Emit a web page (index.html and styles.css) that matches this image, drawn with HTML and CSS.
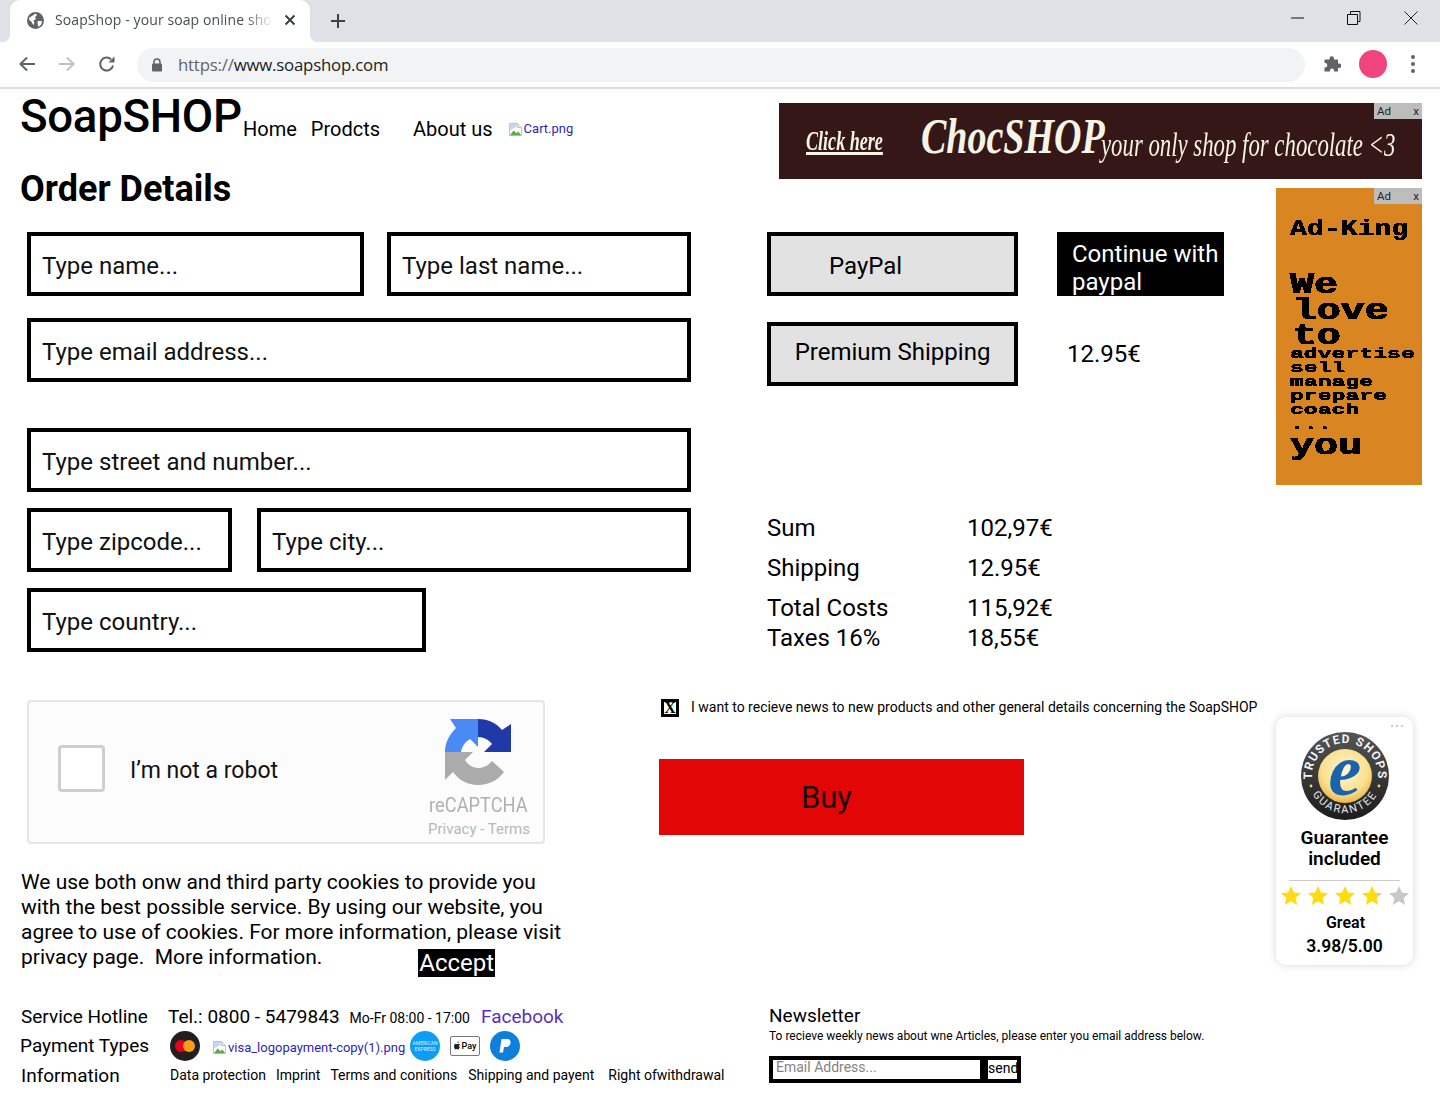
FILE: index.html
```html
<!DOCTYPE html>
<html lang="en">
<head>
<meta charset="utf-8">
<title>SoapShop - your soap online shop</title>
<link rel="stylesheet" href="styles.css">
</head>
<body>
<svg class="defs" width="0" height="0" aria-hidden="true">
  <defs>
    <filter id="pixel" x="0" y="0" width="100%" height="100%">
      <feComponentTransfer><feFuncA type="discrete" tableValues="0 1"/></feComponentTransfer>
    </filter>
    <symbol id="broken" viewBox="0 0 16 16">
      <path d="M1.500 1.500H10L14.500 6V14.500H1.500Z" fill="#fff" stroke="#b9bcc2"/>
      <path d="M10 1.500V6H14.500" fill="#e8eaed" stroke="#b9bcc2"/>
      <path d="M2 14L6 9L9 12L11 10L14 14Z" fill="#5fa84f"/>
      <path d="M2 2H9V5L2 9Z" fill="#c3d7f5"/>
    </symbol>
    <linearGradient id="starpart"><stop offset="78%" stop-color="#ffdc0f"/><stop offset="78%" stop-color="#c8c8c8"/></linearGradient>
    <radialGradient id="gold" cx="50%" cy="40%" r="60%"><stop offset="0%" stop-color="#fff6d8"/><stop offset="70%" stop-color="#fbe08e"/><stop offset="100%" stop-color="#e8b94c"/></radialGradient>
    <linearGradient id="ringfill" x1="0" y1="0" x2="0" y2="1"><stop offset="0%" stop-color="#555"/><stop offset="100%" stop-color="#1c1c1c"/></linearGradient>
    <path id="arc-top" d="M15.400 60.500A33 33 0 1 1 72.600 60.500"/>
    <path id="arc-bottom" d="M8.400 34A37 37 0 1 0 79.600 34"/>
    <polygon id="star" points="10,0 12.900,6.600 20,7.300 14.600,12 16.200,19 10,15.300 3.800,19 5.400,12 0,7.300 7.100,6.600"/>
  </defs>
</svg>

<header class="chrome">
  <div class="tabstrip">
    <div class="tab">
      <svg class="tab-globe" viewBox="0 0 16 16"><circle cx="8" cy="8" r="8" fill="#5f6368"/><path d="M2 5.500L5 3.500L8 1.500L9.500 3L7.500 5L8.500 6.500L6 8L7 10L6 12.500L4 9L2 7.500ZM10 8.500H14L13.500 11.500L11 14L10 11.500Z" fill="#fff"/></svg>
      <span class="tab-title">SoapShop - your soap online shop</span>
      <svg class="tab-close" viewBox="0 0 12 12"><path d="M1.500 1.500L10.500 10.500M10.500 1.500L1.500 10.500" stroke="#3c4043" stroke-width="2"/></svg>
    </div>
    <svg class="new-tab" viewBox="0 0 16 16"><path d="M8 1V15M1 8H15" stroke="#3c4043" stroke-width="2"/></svg>
    <div class="win-controls">
      <svg class="win-min" viewBox="0 0 14 14"><path d="M0 7H13" stroke="#111" stroke-width="1"/></svg>
      <svg class="win-max" viewBox="0 0 14 14"><path d="M3.500 3V.5H13V10.500H10.500M.5 3.500H10.500V13.500H.5Z" fill="none" stroke="#111"/></svg>
      <svg viewBox="0 0 14 14"><path d="M.5 .5L13.500 13.500M13.500 .5L.5 13.500" stroke="#222"/></svg>
    </div>
  </div>
  <div class="toolbar">
    <svg class="tool-icon" viewBox="0 0 18 18"><path d="M17 9H3M9 2.500L2.500 9L9 15.500" fill="none" stroke="#5f6368" stroke-width="2"/></svg>
    <svg class="tool-icon" viewBox="0 0 18 18"><path d="M1 9H15M9 2.500L15.500 9L9 15.500" fill="none" stroke="#bdc1c6" stroke-width="2"/></svg>
    <svg class="tool-icon" viewBox="0 0 18 18"><path d="M15 10.500A6.500 6.500 0 1 1 13.200 4.400" fill="none" stroke="#5f6368" stroke-width="2"/><path d="M16.500 1.500V7.500H10.500Z" fill="#5f6368"/></svg>
    <div class="omnibox">
      <svg class="lock" viewBox="0 0 12 14"><path d="M3 6V4A3 3 0 0 1 9 4V6" fill="none" stroke="#5f6368" stroke-width="1.500"/><rect x="1" y="5.500" width="10" height="8" rx="1.200" fill="#5f6368"/></svg>
      <span class="url"><span class="url-dim">https://</span>www.soapshop.com</span>
    </div>
    <svg class="ext" viewBox="0 0 18 18"><path d="M6.500 3.500A2.200 2.200 0 0 1 11 3.500V4.500H15V8.500H16A2.200 2.200 0 0 1 16 13H15V16.500H11V15.500A2 2 0 0 0 7 15.500V16.500H1.500V12.500H2.500A2.300 2.300 0 0 0 2.500 8H1.500V4.500H6.500Z" fill="#5f6368"/></svg>
    <span class="avatar"></span>
    <span class="kebab"><i></i><i></i><i></i></span>
  </div>
</header>

<div class="page">
  <section class="top">
    <div class="top-left">
      <div class="brand-row">
        <a class="logo">SoapSHOP</a>
        <nav class="nav">
          <a class="nav-home">Home</a>
          <a class="nav-products">Prodcts</a>
          <a class="nav-about">About us</a>
          <a class="broken-link nav-cart"><svg class="broken"><use href="#broken"/></svg>Cart.png</a>
        </nav>
      </div>
      <h1 class="title">Order Details</h1>
    </div>
    <aside class="banner">
      <span class="ad-tag"><span>Ad</span><span>x</span></span>
      <span class="banner-click">Click here</span>
      <span class="banner-brand">ChocSHOP</span>
      <span class="banner-slogan">your only shop for chocolate &lt;3</span>
    </aside>
  </section>

  <section class="main">
    <form class="address">
      <div class="row">
        <input class="field w-name" placeholder="Type name...">
        <input class="field w-last" placeholder="Type last name...">
      </div>
      <div class="row"><input class="field w-full" placeholder="Type email address..."></div>
      <div class="row row-gap"><input class="field w-full" placeholder="Type street and number..."></div>
      <div class="row row-tight">
        <input class="field w-zip" placeholder="Type zipcode...">
        <input class="field w-city" placeholder="Type city...">
      </div>
      <div class="row row-tight"><input class="field w-country" placeholder="Type country..."></div>
    </form>

    <div class="checkout">
      <div class="pay-row">
        <div class="option option-paypal">PayPal</div>
        <div class="continue">Continue with paypal</div>
      </div>
      <div class="ship-row">
        <div class="option option-ship">Premium Shipping</div>
        <div class="ship-price">12.95€</div>
      </div>
      <dl class="totals">
        <div class="total-line"><dt>Sum</dt><dd>102,97€</dd></div>
        <div class="total-line"><dt>Shipping</dt><dd>12.95€</dd></div>
        <div class="total-line"><dt>Total Costs</dt><dd>115,92€</dd></div>
        <div class="total-line total-tax"><dt>Taxes 16%</dt><dd>18,55€</dd></div>
      </dl>
    </div>

    <aside class="side-ad">
      <span class="ad-tag"><span>Ad</span><span>x</span></span>
      <div class="px px-title">Ad-King</div>
      <div class="px px-big px-we">We</div>
      <div class="px px-big px-love">love</div>
      <div class="px px-big px-to">to</div>
      <div class="px px-small px-adv">advertise</div>
      <div class="px px-small">sell</div>
      <div class="px px-small">manage</div>
      <div class="px px-small">prepare</div>
      <div class="px px-small">coach</div>
      <div class="px px-small px-dots">...</div>
      <div class="px px-big px-you">you</div>
    </aside>
  </section>

  <section class="lower">
    <div class="lower-left">
      <div class="captcha">
        <span class="captcha-box"></span>
        <span class="captcha-label">I’m not a robot</span>
        <div class="captcha-brand">
          <svg class="captcha-logo" viewBox="0 0 66 67">
            <path d="M33 0C44 0 51 4 57 11L66 5V33H39L47 25C44 21 39 18 33 18Z" fill="#1f39a8"/>
            <path d="M5 0H33V28L25 20C20 23 17 27 16 33H0C0 24 4 16 11 9Z" fill="#4a8af4"/>
            <path d="M0 33H28L20 41C23 46 28 49 33 49C39 49 44 46 47 42L59 53C53 61 44 66 33 66C22 66 14 61 8 53L0 61Z" fill="#ababab"/>
          </svg>
          <span class="captcha-name">reCAPTCHA</span>
          <span class="captcha-links">Privacy - Terms</span>
        </div>
      </div>
      <p class="cookies">We use both onw and third party cookies to provide you with the best possible service. By using our website, you agree to use of cookies. For more information, please visit privacy page.&nbsp; More information.<span class="accept">Accept</span></p>
    </div>

    <div class="lower-mid">
      <label class="news-check"><span class="xbox">X</span><span>I want to recieve news to new products and other general details concerning the SoapSHOP</span></label>
      <div class="buy">Buy</div>
    </div>

    <aside class="trust">
      <span class="trust-dots"><i></i><i></i><i></i></span>
      <svg class="seal" viewBox="0 0 88 88">
        <circle cx="44" cy="44" r="44" fill="url(#ringfill)"/>
        <circle cx="44" cy="44" r="27" fill="url(#gold)"/>
        <text class="seal-text"><textPath href="#arc-top" startOffset="50%" text-anchor="middle">TRUSTED SHOPS</textPath></text>
        <text class="seal-text seal-text-low"><textPath href="#arc-bottom" startOffset="50%" text-anchor="middle">GUARANTEE</textPath></text>
        <circle cx="10" cy="54" r="1.400" fill="#f6d774"/><circle cx="78" cy="54" r="1.400" fill="#f6d774"/>
        <text class="seal-e" x="44" y="63" text-anchor="middle">e</text>
      </svg>
      <div class="trust-head">Guarantee<br>included</div>
      <hr class="trust-line">
      <svg class="stars" viewBox="0 0 128 20">
        <use href="#star" x="0" fill="#ffdc0f"/>
        <use href="#star" x="27" fill="#ffdc0f"/>
        <use href="#star" x="54" fill="#ffdc0f"/>
        <use href="#star" x="81" fill="url(#starpart)"/>
        <use href="#star" x="108" fill="#c8c8c8"/>
      </svg>
      <div class="trust-great">Great</div>
      <div class="trust-score">3.98/5.00</div>
    </aside>
  </section>

  <footer class="footer">
    <div class="foot-left">
      <div class="foot-row foot-row-1">
        <span class="foot-label">Service Hotline</span>
        <span class="tel">Tel.: 0800 - 5479843</span>
        <span class="hours">Mo-Fr 08:00 - 17:00</span>
        <a class="facebook">Facebook</a>
      </div>
      <div class="foot-row foot-row-2">
        <span class="foot-label foot-label-pay">Payment Types</span>
        <span class="pay-icons">
          <svg class="pay-icon" viewBox="0 0 30 30"><circle cx="15" cy="15" r="15" fill="#231f20"/><circle cx="11" cy="15" r="6" fill="#eb001b"/><circle cx="19" cy="15" r="6" fill="#f79e1b"/></svg>
          <a class="broken-link pay-visa"><svg class="broken"><use href="#broken"/></svg>visa_logopayment-copy(1).png</a>
          <span class="amex">AMERICAN<br>EXPRESS</span>
          <span class="applepay"><svg viewBox="0 0 8 10"><path d="M5.500 0C5.600 1.200 4.700 2 3.800 2C3.700 1 4.500 .2 5.500 0ZM6.600 7C6.200 8.300 5.400 9.500 4.600 9.500C4 9.500 3.800 9.100 3.200 9.100C2.600 9.100 2.300 9.500 1.800 9.500C.9 9.500 0 7.600 0 5.900C0 4.200 1 3.100 2.100 3.100C2.700 3.100 3.200 3.500 3.600 3.500C4 3.500 4.500 3 5.300 3C5.900 3 6.500 3.300 6.900 3.900C5.400 4.700 5.600 6.600 6.600 7Z" fill="#222"/></svg>Pay</span>
          <svg class="pay-icon pay-pp" viewBox="0 0 30 30"><circle cx="15" cy="15" r="15" fill="#0f7fdc"/><path d="M11.500 8H17C20 8 21 10 20.400 12.500C19.800 15 18 16 15.500 16H14L13 21.500H9.500Z" fill="#fff"/></svg>
        </span>
      </div>
      <div class="foot-row foot-row-3">
        <span class="foot-label">Information</span>
        <a class="info-1">Data protection</a>
        <a class="info-2">Imprint</a>
        <a class="info-3">Terms and conitions</a>
        <a class="info-4">Shipping and payent</a>
        <a class="info-5">Right ofwithdrawal</a>
      </div>
    </div>
    <div class="newsletter">
      <div class="news-title">Newsletter</div>
      <div class="news-text">To recieve weekly news about wne Articles, please enter you email address below.</div>
      <form class="news-form">
        <input class="news-input" placeholder="Email Address...">
        <button class="news-send" type="button">send</button>
      </form>
    </div>
  </footer>
</div>
</body>
</html>
```
FILE: styles.css
```css
* { box-sizing: border-box; }
html, body { margin: 0; height: 1113px; overflow: hidden; background: #fff; }
body { font-family: Roboto, "Liberation Sans", sans-serif; color: #000; }
.defs { position: absolute; }
a { color: inherit; text-decoration: none; }

/* browser chrome */
.chrome { height: 89px; border-bottom: 2px solid #dadce0; font-family: "Open Sans", "Noto Sans", sans-serif; }
.tabstrip { height: 42px; background: #dee1e6; display: flex; align-items: center; }
.tab { position: relative; width: 300px; height: 42px; margin-left: 10px; background: #fff; border-radius: 10px 10px 0 0; display: flex; align-items: center; padding: 0 14px 2px 17px; }
.tab::before, .tab::after { content: ""; position: absolute; bottom: 0; width: 8px; height: 8px; }
.tab::before { left: -8px; background: radial-gradient(circle at 0 0, #dee1e6 8px, #fff 8.5px); }
.tab::after { right: -8px; background: radial-gradient(circle at 100% 0, #dee1e6 8px, #fff 8.5px); }
.tab-globe { width: 17px; height: 17px; flex: none; }
.tab-title { margin: 0 0 2px 11px; width: 218px; font-size: 14px; letter-spacing: .1px; color: #4a4d51; white-space: nowrap; overflow: hidden; -webkit-mask-image: linear-gradient(90deg, #000 190px, transparent 218px); mask-image: linear-gradient(90deg, #000 190px, transparent 218px); }
.tab-close { width: 12px; height: 12px; margin-left: auto; flex: none; }
.new-tab { width: 16px; height: 16px; margin-left: 20px; }
.win-controls { margin-left: auto; display: flex; gap: 44px; padding: 0 22px 6px 0; }
.win-controls svg { width: 14px; height: 14px; display: block; }
.win-min { margin-right: -2px; }
.win-max { margin-right: -1px; }
.toolbar { height: 45px; background: #fff; display: flex; align-items: center; padding: 0 18px 2px 18px; }
.tool-icon { width: 18px; height: 18px; margin-right: 22px; flex: none; }
.omnibox { width: 1168px; height: 34px; margin: 2px 0 0 -1px; border-radius: 17px; background: #f1f3f4; display: flex; align-items: center; padding-left: 14px; }
.lock { width: 12px; height: 14px; }
.url { margin-left: 15px; font-size: 16.8px; letter-spacing: -.2px; color: #202124; }
.url-dim { color: #5f6368; }
.ext { width: 18px; height: 18px; margin-left: 18px; flex: none; }
.avatar { width: 28px; height: 28px; border-radius: 50%; background: #f1437d; margin-left: 18px; flex: none; }
.kebab { display: flex; flex-direction: column; gap: 3px; margin-left: 24px; }
.kebab i { width: 4px; height: 4px; border-radius: 50%; background: #5f6368; display: block; }

/* header */
.page { display: flex; flex-direction: column; }
.top { height: 99px; display: flex; align-items: flex-start; justify-content: space-between; padding-left: 20px; }
.brand-row { display: flex; align-items: flex-end; height: 57px; }
.logo { font-size: 45.6px; font-weight: 500; line-height: 56px; width: 223px; letter-spacing: -.3px; margin-bottom: 1px; }
.nav { display: flex; align-items: baseline; font-size: 20px; line-height: 24px; padding-bottom: 3px; }
.nav-products { margin-left: 14px; }
.nav-about { margin-left: 33px; }
.nav-cart { margin: 0 0 2px 15px; align-self: flex-end; }
.broken-link { font-size: 13px; color: #2f1fb5; display: inline-flex; align-items: center; white-space: nowrap; }
.broken { width: 15px; height: 15px; margin-right: 1px; flex: none; }
.title { margin: 22px 0 0; font-size: 36px; line-height: 42px; font-weight: 700; }
.banner { position: relative; width: 643px; height: 76px; margin: 14px 18px 0 0; background: #351717; color: #f6f4e4; display: flex; align-items: center; font-family: "Liberation Serif", serif; font-style: italic; white-space: nowrap; }
.ad-tag { position: absolute; top: 0; right: 0; width: 48px; height: 16px; background: #bdbdbd; color: #222; font: 11.5px/16px Roboto, sans-serif; display: flex; justify-content: space-between; padding: 0 3px; }
.banner-click { margin-left: 27px; width: 116px; font-size: 27px; font-weight: 700; transform: scaleX(.67); transform-origin: left; text-decoration: underline; text-decoration-thickness: 3px; text-underline-offset: 2px; flex: none; }
.banner-brand { width: 178px; font-size: 50px; font-weight: 700; transform: translateY(-5px) scaleX(.76); transform-origin: left; flex: none; margin-left: -1px; }
.banner-slogan { font-size: 34px; transform: scaleX(.67); transform-origin: left; margin-top: 8px; flex: none; margin-left: 2px; }

/* main */
.main { display: flex; align-items: flex-start; height: 464px; }
.address { width: 664px; margin: 44px 0 0 27px; display: flex; flex-direction: column; }
.row { display: flex; justify-content: space-between; margin-bottom: 22px; }
.row-gap { margin-top: 24px; margin-bottom: 16px; }
.row-tight { margin-bottom: 16px; }
.field { height: 64px; border: 4px solid #000; padding: 4px 11px 0; font: 24px Roboto, sans-serif; color: #000; outline: none; background: #fff; border-radius: 0; }
.field::placeholder { color: #111; opacity: 1; }
.w-name { width: 337px; }
.w-last { width: 304px; }
.w-full { width: 664px; }
.w-zip { width: 205px; }
.w-city { width: 434px; }
.w-country { width: 399px; }

.checkout { width: 457px; margin: 44px 0 0 76px; font-size: 24px; }
.pay-row, .ship-row { display: flex; align-items: center; }
.ship-row { margin-top: 26px; }
.option { width: 251px; height: 64px; border: 4px solid #000; background: #e2e2e2; display: flex; align-items: center; flex: none; }
.option-paypal { padding: 4px 0 0 58px; }
.option-ship { justify-content: center; padding-bottom: 4px; }
.continue { margin-left: 39px; width: 167px; height: 64px; background: #000; color: #fff; padding: 8px 0 0 15px; line-height: 28px; }
.ship-price { margin-left: 49px; margin-top: -1px; }
.totals { margin: 122px 0 0; }
.total-line { display: flex; height: 40px; line-height: 40px; }
.total-line dt { width: 200px; }
.total-line dd { margin: 0; }
.total-tax { height: 30px; line-height: 20px; }

.side-ad { position: relative; width: 146px; height: 297px; margin-left: 52px; background: #d88522; overflow: hidden; padding: 32px 0 0 14px; font-family: "Liberation Mono", "DejaVu Sans Mono", monospace; font-weight: 700; -webkit-text-stroke: .5px #000; }
.ad-tag { -webkit-text-stroke: 0; font-weight: 400; }
.px { transform-origin: left; white-space: nowrap; filter: url(#pixel); }
.px-title { font-size: 22px; line-height: 20px; transform: scaleX(1.28); margin-bottom: 33px; }
.px-big { font-size: 29px; line-height: 25.5px; transform: scaleX(1.38); -webkit-text-stroke: 1px #000; }
.px-love, .px-to { padding-left: 2px; }
.px-small { font-size: 14px; line-height: 14.2px; transform: scaleX(1.65); }
.px-adv { margin-top: -3px; }
.px-dots { line-height: 20px; margin-top: -3px; }
.px-you { margin-top: -1px; }

/* lower */
.lower { display: flex; align-items: flex-start; height: 301px; margin-top: 48px; }
.lower-left { width: 659px; padding-left: 21px; flex: none; }
.captcha { margin-left: 6px; width: 518px; height: 144px; border: 2px solid #e6e6e6; border-radius: 4px; background: #fcfcfc; display: flex; align-items: center; padding-left: 29px; position: relative; }
.captcha-box { width: 47px; height: 47px; border: 3px solid #cfcfcf; border-radius: 4px; background: #fff; flex: none; margin-bottom: 8px; }
.captcha-label { margin: 0 0 4px 25px; font-size: 23px; color: #111; }
.captcha-brand { margin-left: auto; margin-right: 13px; width: 104px; display: flex; flex-direction: column; align-items: center; align-self: flex-start; padding-top: 17px; }
.captcha-logo { width: 66px; height: 67px; display: block; }
.captcha-name { font-size: 20.5px; line-height: 24px; color: #b0b0b0; margin-top: 7px; transform: scaleX(.89); white-space: nowrap; }
.captcha-links { font-size: 15px; line-height: 18px; color: #b8b8b8; margin-top: 3px; padding-left: 2px; white-space: nowrap; }
.cookies { width: 545px; margin: 26px 0 0; font-size: 21px; line-height: 25px; }
.accept { font-size: 24px; line-height: 1; vertical-align: -7px; background: #000; color: #fff; margin-left: 96px; padding: 0 1px; }

.lower-mid { width: 638px; flex: none; margin-right: -21px; }
.news-check { display: flex; align-items: center; height: 18px; margin: -2px 0 0 2px; font-size: 14px; gap: 12px; white-space: nowrap; }
.xbox { width: 18px; height: 18px; background: #000; display: inline-flex; justify-content: center; align-items: center; position: relative; z-index: 0; font: 700 16px/1 "Liberation Serif", serif; color: #000; flex: none; margin-top: 1px; }
.xbox::before { content: ""; position: absolute; inset: 3px; background: #fff; z-index: -1; }
.buy { width: 365px; height: 76px; margin-top: 43px; background: #e30606; font-size: 31px; color: #1a0a0a; display: flex; align-items: center; justify-content: center; padding: 0 30px 0 0; }

.trust { position: relative; width: 137px; height: 248px; margin: 17px 0 0 0; flex: none; border-radius: 10px; background: #fff; box-shadow: 0 0 8px rgba(0,0,0,.16); display: flex; flex-direction: column; align-items: center; padding-top: 15px; }
.trust-dots { position: absolute; top: 8px; right: 10px; display: flex; gap: 3px; }
.trust-dots i { width: 2px; height: 2px; background: #ccc; display: block; }
.seal { width: 88px; height: 88px; flex: none; display: block; }
.seal-text { font: 700 12px Roboto, sans-serif; fill: #f4f4f4; letter-spacing: 1.200px; }
.seal-text-low { font-weight: 400; font-size: 11px; fill: #e8e8e8; letter-spacing: 1.800px; }
.seal-e { font: italic 700 74px "Liberation Serif", serif; fill: #1b64ab; }
.trust-head { font-size: 19px; font-weight: 600; line-height: 21px; text-align: center; margin-top: 7px; }
.trust-line { width: 111px; height: 1px; border: 0; background: #ccc; margin: 11px 0 0; }
.stars { width: 128px; height: 20px; margin-top: 5px; flex: none; overflow: visible; display: block; }
.trust-great { font-size: 16px; font-weight: 600; line-height: 20px; margin: 7px 0 0 2px; }
.trust-score { font-size: 17.500px; font-weight: 600; line-height: 22px; margin-top: 2px; }

/* footer */
.footer { display: flex; align-items: flex-start; padding-left: 21px; }
.foot-left { width: 748px; flex: none; }
.foot-row { display: flex; align-items: center; height: 30px; white-space: nowrap; font-size: 14px; }
.foot-row-2 { height: 29px; }
.foot-label { font-size: 19px; width: 147px; flex: none; }
.foot-label-pay { margin-left: -1px; width: 150px; }
.tel { font-size: 19px; }
.hours { margin-left: 10px; font-size: 14px; padding-top: 3px; }
.facebook { margin-left: 11px; font-size: 19px; color: #5a2fc4; }
.pay-icons { display: flex; align-items: center; }
.pay-icon { width: 30px; height: 30px; display: block; }
.pay-visa { margin-left: 12px; width: 198px; font-size: 13px; padding-top: 3px; }
.amex { width: 30px; height: 30px; border-radius: 50%; background: #0f9cf5; color: #dff1ff; font-size: 5px; line-height: 6px; text-align: center; display: flex; align-items: center; justify-content: center; }
.applepay { width: 30px; height: 20px; margin-left: 10px; border: 1px solid #777; border-radius: 2px; background: #fff; font-size: 9px; display: flex; align-items: center; justify-content: center; gap: 1px; font-weight: 500; }
.applepay svg { width: 7px; height: 9px; }
.pay-pp { margin-left: 10px; }
.info-1 { margin-left: 2px; }
.info-2 { margin-left: 10px; }
.info-3 { margin-left: 10px; }
.info-4 { margin-left: 11px; }
.info-5 { margin-left: 14px; }
.newsletter { flex: none; padding-top: 3px; }
.news-title { font-size: 19px; line-height: 24px; }
.news-text { font-size: 12px; line-height: 16px; }
.news-form { margin-top: 12px; width: 252px; height: 27px; background: #000; padding: 4px; display: flex; justify-content: space-between; }
.news-input { width: 207px; height: 19px; border: 0; padding: 0 3px 5px; font: 14px Roboto, sans-serif; outline: none; border-radius: 0; }
.news-input::placeholder { color: #8a7f7f; opacity: 1; }
.news-send { width: 29px; height: 19px; border: 0; padding: 0 0 5px; font: 14px Roboto, sans-serif; background: #fff; color: #000; overflow: visible; white-space: nowrap; }
```
